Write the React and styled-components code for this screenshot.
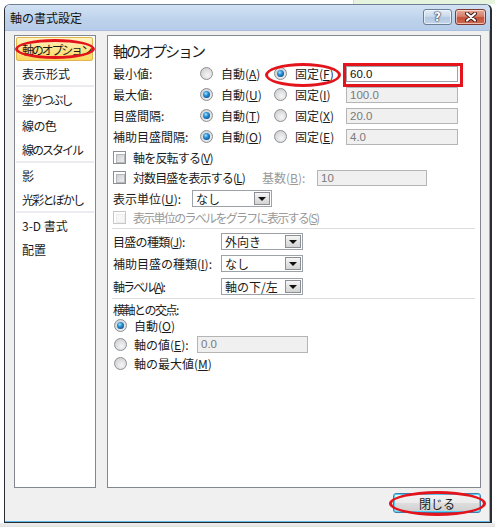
import React from 'react'
import styled, { createGlobalStyle } from 'styled-components'

const GlobalStyle = createGlobalStyle`
  html, body {
    margin: 0;
    padding: 0;
  }
  body {
    width: 495px;
    height: 527px;
    overflow: hidden;
    background:
      linear-gradient(to right, #ffffff 353px, #cfe3c4 353px, #cfe3c4 354px, #e6f4de 354px) top left / 100% 4px no-repeat,
      linear-gradient(#ececec, #e2e2e2) bottom left / 100% 4px no-repeat,
      #ffffff;
    font-family: "Noto Sans CJK JP", "Noto Sans", sans-serif;
    font-size: 12px;
    color: #1b1b1b;
  }
`

const Page = styled.div`
  padding: 4px 0 0 4px;
`

const Window = styled.div`
  width: 485px;
  height: 517px;
  display: flex;
  flex-direction: column;
  border: 1px solid #2a2d33;
  border-top-color: #6f7f95;
  border-right-width: 2px;
  border-radius: 6px 6px 0 0;
  background: #f0f0f0;
  overflow: hidden;
`

const TitleBar = styled.div`
  height: 26px;
  flex: none;
  display: flex;
  align-items: flex-start;
  padding: 4px 4px 0 5px;
  box-sizing: border-box;
  background: linear-gradient(#d3e2f3, #bcd2eb 60%, #b6cde9);
  border-bottom: 1px solid #a9bfdb;
`

const Title = styled.div`
  flex: 1;
  font-size: 12px;
  line-height: 17px;
  color: #111;
`

const CaptionButton = styled.div`
  width: ${(p) => p.$w}px;
  height: 16px;
  margin-left: ${(p) => p.$gap || 0}px;
  box-sizing: border-box;
  border: 1px solid ${(p) => (p.$close ? '#7e3a2f' : '#6b7e98')};
  border-radius: 3px;
  display: flex;
  align-items: center;
  justify-content: center;
  background: ${(p) =>
    p.$close
      ? 'linear-gradient(#e9aa9a, #d57f6c 45%, #c4503a 55%, #d16b4f)'
      : 'linear-gradient(#e4edf7, #cbdaec 45%, #b3c8e2 55%, #c3d6ec)'};
  box-shadow: inset 0 0 0 1px rgba(255, 255, 255, 0.55);
  color: #fff;
  font-family: "DejaVu Sans", sans-serif;
  font-weight: bold;
  font-size: 12px;
  text-shadow: 0 0 1px #23354f, 0 0 1px #23354f, 0 0 2px #23354f;
`

const Client = styled.div`
  flex: 1;
  display: flex;
  flex-direction: column;
  padding: 4px 8px 0 9px;
  border-right: 1px solid #5cb8e4;
  border-bottom: 1px solid #5cb8e4;
`

const Panels = styled.div`
  height: 453px;
  display: flex;
  gap: 11px;
`

const NavList = styled.div`
  width: 82px;
  box-sizing: border-box;
  border: 1px solid #828790;
  background: #fff;
  padding: 1px 2px 1px 1px;
`

const NavItem = styled.div`
  position: relative;
  height: 24px;
  box-sizing: border-box;
  display: flex;
  align-items: center;
  padding-left: 6px;
  white-space: nowrap;
  letter-spacing: ${(p) => p.$ls || 0}px;
  ${(p) =>
    p.$active &&
    `
    border: 1px solid #e0b64e;
    border-radius: 2px;
    padding-left: 5px;
    background: linear-gradient(#fff4c4, #fee58e 50%, #fdd75f);
  `}
`

const NavSep = styled.div`
  height: 2px;
  margin-right: -1px;
  background: #ebebf0;
`

const Panel = styled.div`
  flex: 1;
  box-sizing: border-box;
  border: 1px solid #828790;
  background: #fff;
  padding: 0 5px 0 5px;
`

const Heading = styled.div`
  height: 27px;
  box-sizing: border-box;
  padding-top: 5px;
  font-size: 15px;
  letter-spacing: -2px;
  line-height: 20px;
`

const Row = styled.div`
  height: ${(p) => p.$h || 21}px;
  display: flex;
  align-items: center;
  padding-left: ${(p) => p.$indent || 0}px;
  white-space: nowrap;
`

const Label = styled.div`
  width: ${(p) => p.$w}px;
  flex: none;
  letter-spacing: ${(p) => p.$ls || 0}px;
`

const Choice = styled.div`
  position: relative;
  width: ${(p) => (p.$w ? `${p.$w}px` : 'auto')};
  height: 100%;
  flex: none;
  display: flex;
  align-items: center;
  gap: ${(p) => p.$gap || 8}px;
  color: ${(p) => (p.$disabled ? '#9a9a9a' : 'inherit')};
`

const Caption = styled.span`
  letter-spacing: ${(p) => p.$ls || 0}px;
`

const Radio = styled.span`
  width: 13px;
  height: 13px;
  flex: none;
  box-sizing: border-box;
  border-radius: 50%;
  border: 1px solid #8c8f93;
  background: radial-gradient(circle at 60% 65%, #f6f6f6 0%, #dcdcdc 55%, #c9c9c9 100%);
  display: flex;
  align-items: center;
  justify-content: center;
  &::after {
    content: '';
    display: ${(p) => (p.$checked ? 'block' : 'none')};
    width: 7px;
    height: 7px;
    border-radius: 50%;
    background: radial-gradient(circle at 40% 35%, #a6e6ff 0%, #2e93d8 35%, #0d5699 75%, #083a6c 100%);
  }
`

const Check = styled.span`
  width: 13px;
  height: 13px;
  flex: none;
  box-sizing: border-box;
  border: 1px solid ${(p) => (p.$disabled ? '#c8c8c8' : '#8c8f93')};
  background: #fff;
  padding: 2px;
  &::after {
    content: '';
    display: block;
    width: 7px;
    height: 7px;
    border: 1px solid ${(p) => (p.$disabled ? '#ececec' : '#b4b6b9')};
    background: ${(p) =>
      p.$disabled ? '#f7f7f7' : 'linear-gradient(135deg, #cfd1d4, #eeeeee)'};
  }
`

const Field = styled.div`
  position: relative;
  width: ${(p) => p.$w}px;
  height: ${(p) => p.$h || 16}px;
  flex: none;
  box-sizing: border-box;
  border: 1px solid ${(p) => (p.$disabled ? '#b5b5b5' : '#a0a4aa')};
  background: ${(p) => (p.$disabled ? '#f0f0f0' : '#fff')};
  color: ${(p) => (p.$disabled ? '#7a7a7a' : '#111')};
  padding-left: 3px;
  display: flex;
  align-items: center;
  font-family: "Liberation Sans", "Noto Sans", sans-serif;
  font-size: 11.5px;
`

const Select = styled.div`
  width: ${(p) => p.$w}px;
  height: 17px;
  flex: none;
  box-sizing: border-box;
  border: 1px solid #9da2a9;
  background: #fff;
  display: flex;
  align-items: stretch;
  padding: 1px;
`

const SelectText = styled.div`
  flex: 1;
  padding-left: 2px;
  display: flex;
  align-items: center;
`

const DropButton = styled.div`
  width: 16px;
  flex: none;
  box-sizing: border-box;
  border: 1px solid #8b8e93;
  background: linear-gradient(#f6f6f6, #e3e3e3 50%, #d4d4d4);
  display: flex;
  align-items: center;
  justify-content: center;
  &::after {
    content: '';
    border-left: 4px solid transparent;
    border-right: 4px solid transparent;
    border-top: 4px solid #111;
    margin-top: 1px;
  }
`

const Separator = styled.div`
  height: 1px;
  margin: ${(p) => p.$mt || 0}px 0 ${(p) => p.$mb || 0}px -1px;
  background: #dcdcdc;
`

const Footer = styled.div`
  display: flex;
  justify-content: flex-end;
  padding-top: 5px;
`

const PushButton = styled.div`
  position: relative;
  width: 88px;
  height: 20px;
  box-sizing: border-box;
  border: 1px solid #3c7fb1;
  border-radius: 3px;
  background: linear-gradient(#f3f3f3, #ebebeb 48%, #dddddd 52%, #cfcfcf);
  box-shadow: inset 0 0 0 1px #4fd4fa;
  display: flex;
  align-items: center;
  justify-content: center;
`

const Mark = styled.span`
  position: absolute;
  left: ${(p) => p.$l}px;
  top: ${(p) => p.$t}px;
  width: ${(p) => p.$w}px;
  height: ${(p) => p.$h}px;
  box-sizing: border-box;
  border: 3px solid #e3141c;
  border-radius: ${(p) => (p.$box ? '0' : '50%')};
  pointer-events: none;
`

const u = (ch) => <u>{ch}</u>

const Axis = [
  { label: '最小値:', a: 'A', f: 'F', value: '60.0', fixed: true },
  { label: '最大値:', a: 'U', f: 'I', value: '100.0' },
  { label: '目盛間隔:', a: 'T', f: 'X', value: '20.0' },
  { label: '補助目盛間隔:', a: 'O', f: 'E', value: '4.0' },
]

const navItems = [
  { text: '軸のオプション', active: true, ls: -2.2 },
  { text: '表示形式', sep: true },
  { text: '塗りつぶし', sep: true, ls: -2.2 },
  { text: '線の色', ls: -0.6 },
  { text: '線のスタイル', sep: true, ls: -2 },
  { text: '影' },
  { text: '光彩とぼかし', sep: true, ls: -1.8 },
  { text: '3-D 書式' },
  { text: '配置' },
]

function CloseGlyph() {
  return (
    <svg width="14" height="10" viewBox="0 0 14 10">
      <path d="M3 1.5 L11 8.5 M11 1.5 L3 8.5" stroke="#3a1a14" strokeWidth="4" strokeLinecap="round" />
      <path d="M3 1.5 L11 8.5 M11 1.5 L3 8.5" stroke="#fff" strokeWidth="2.2" strokeLinecap="round" />
    </svg>
  )
}

export default function App() {
  return (
    <Page>
      <GlobalStyle />
      <Window>
        <TitleBar>
          <Title>軸の書式設定</Title>
          <CaptionButton $w={29}>?</CaptionButton>
          <CaptionButton $w={31} $gap={3} $close>
            <CloseGlyph />
          </CaptionButton>
        </TitleBar>
        <Client>
          <Panels>
            <NavList>
              {navItems.map((item) => (
                <React.Fragment key={item.text}>
                  <NavItem $active={item.active} $ls={item.ls}>
                    {item.text}
                    {item.active && <Mark $l={-2} $t={1} $w={80} $h={20} />}
                  </NavItem>
                  {item.sep && <NavSep />}
                </React.Fragment>
              ))}
            </NavList>
            <Panel>
              <Heading>軸のオプション</Heading>
              {Axis.map((r) => (
                <Row key={r.label}>
                  <Label $w={87}>{r.label}</Label>
                  <Choice $w={74}>
                    <Radio $checked={!r.fixed} />
                    <span>自動({u(r.a)})</span>
                  </Choice>
                  <Choice $w={72}>
                    <Radio $checked={r.fixed} />
                    <span>固定({u(r.f)})</span>
                    {r.fixed && <Mark $l={-9} $t={0} $w={76} $h={24} />}
                  </Choice>
                  <Field $w={112} $disabled={!r.fixed}>
                    {r.value}
                    {r.fixed && <Mark $box $l={-4} $t={-4} $w={120} $h={24} />}
                  </Field>
                </Row>
              ))}
              <Row>
                <Choice $gap={7}>
                  <Check />
                  <Caption $ls={-0.8}>軸を反転する({u('V')})</Caption>
                </Choice>
              </Row>
              <Row $h={19}>
                <Choice $w={149} $gap={7}>
                  <Check />
                  <Caption $ls={-0.9}>対数目盛を表示する({u('L')})</Caption>
                </Choice>
                <Choice $w={55} $disabled>
                  <span>基数({u('B')}):</span>
                </Choice>
                <Field $w={110} $disabled>10</Field>
              </Row>
              <Row $h={22}>
                <Label $w={79}>表示単位({u('U')}):</Label>
                <Select $w={80}>
                  <SelectText>なし</SelectText>
                  <DropButton />
                </Select>
              </Row>
              <Row $h={17}>
                <Choice $gap={7} $disabled>
                  <Check $disabled />
                  <Caption $ls={-1.7}>表示単位のラベルをグラフに表示する({u('S')})</Caption>
                </Choice>
              </Row>
              <Separator $mt={2} $mb={2} />
              <Row>
                <Label $w={108} $ls={-0.7}>目盛の種類({u('J')}):</Label>
                <Select $w={82}>
                  <SelectText>外向き</SelectText>
                  <DropButton />
                </Select>
              </Row>
              <Row $h={23}>
                <Label $w={108}>補助目盛の種類({u('I')}):</Label>
                <Select $w={82}>
                  <SelectText>なし</SelectText>
                  <DropButton />
                </Select>
              </Row>
              <Row $h={22}>
                <Label $w={108} $ls={-2}>軸ラベル({u('A')}):</Label>
                <Select $w={82}>
                  <SelectText>軸の下/左</SelectText>
                  <DropButton />
                </Select>
              </Row>
              <Separator $mt={1} $mb={2} />
              <Row $h={16}>
                <Label $w={120} $ls={-1.5}>横軸との交点:</Label>
              </Row>
              <Row $h={17} $indent={1}>
                <Choice $gap={7}>
                  <Radio $checked />
                  <span>自動({u('O')})</span>
                </Choice>
              </Row>
              <Row $h={20} $indent={1}>
                <Choice $w={83} $gap={7}>
                  <Radio />
                  <span>軸の値({u('E')}):</span>
                </Choice>
                <Field $w={111} $h={17} $disabled>0.0</Field>
              </Row>
              <Row $h={18} $indent={1}>
                <Choice $gap={7}>
                  <Radio />
                  <span>軸の最大値({u('M')})</span>
                </Choice>
              </Row>
            </Panel>
          </Panels>
          <Footer>
            <PushButton>
              閉じる
              <Mark $l={-5} $t={-3} $w={97} $h={25} />
            </PushButton>
          </Footer>
        </Client>
      </Window>
    </Page>
  )
}
